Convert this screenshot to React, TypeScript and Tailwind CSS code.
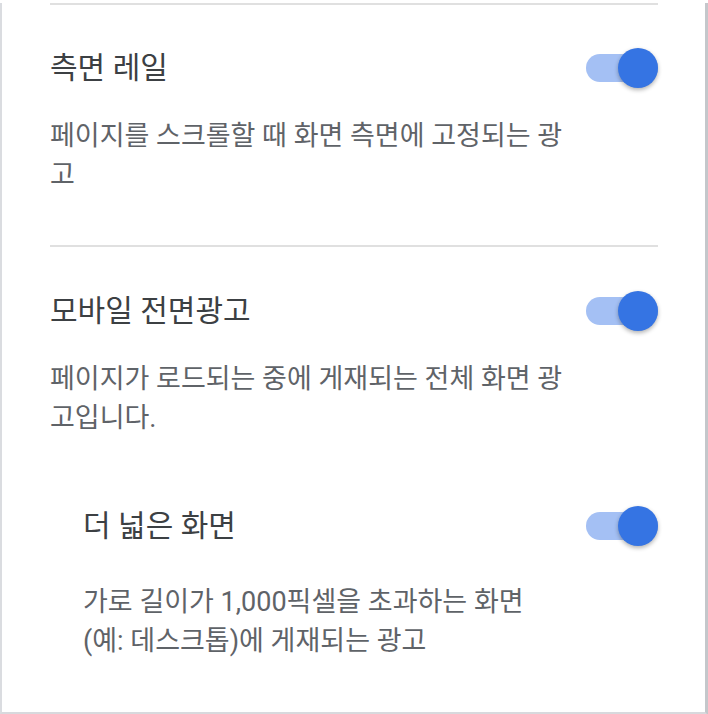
import React from "react";

const font = { fontFamily: 'Roboto, "Noto Sans CJK KR", sans-serif' };

function Toggle() {
  return (
    <div className="relative w-[72px] h-[40px] shrink-0 flex items-center">
      <div className="w-[72px] h-[28px] rounded-full bg-[#a4c0f4]" />
      <div className="absolute right-0 top-0 w-[40px] h-[40px] rounded-full bg-[#3574e3] shadow-[0_2px_4px_rgba(0,0,0,0.3)]" />
    </div>
  );
}

function Setting({
  title,
  desc,
  indent = false,
}: {
  title: string;
  desc: string;
  indent?: boolean;
}) {
  return (
    <div className={indent ? "pl-[33px]" : ""}>
      <div className="flex items-center justify-between h-[40px]">
        <div className="text-[30px] leading-[40px] text-[#3c4043]">{title}</div>
        <Toggle />
      </div>
      <p
        className={`text-[27px] leading-[39px] text-[#5f6368] ${
          indent ? "mt-[37px] w-[460px]" : "mt-[29px] w-[525px]"
        }`}
      >
        {desc}
      </p>
    </div>
  );
}

export default function App() {
  return (
    <div className="w-[708px] h-[714px] bg-white overflow-hidden" style={font}>
      <div className="h-[712px] border-l-2 border-l-[#dadce0] border-r-[3px] border-r-[#c4c7cb] border-b-[3px] border-b-[#d8d9dd] pl-[48px] pr-[47px]">
        <div className="mt-[3px] h-[2px] bg-[#e0e0e0]" />
        <div className="pt-[43px] pb-[50px]">
          <Setting title="측면 레일" desc="페이지를 스크롤할 때 화면 측면에 고정되는 광고" />
        </div>
        <div className="h-[2px] bg-[#e0e0e0]" />
        <div className="pt-[44px]">
          <Setting title="모바일 전면광고" desc="페이지가 로드되는 중에 게재되는 전체 화면 광고입니다." />
        </div>
        <div className="pt-[68px]">
          <Setting
            indent
            title="더 넓은 화면"
            desc="가로 길이가 1,000픽셀을 초과하는 화면 (예: 데스크톱)에 게재되는 광고"
          />
        </div>
      </div>
    </div>
  );
}
